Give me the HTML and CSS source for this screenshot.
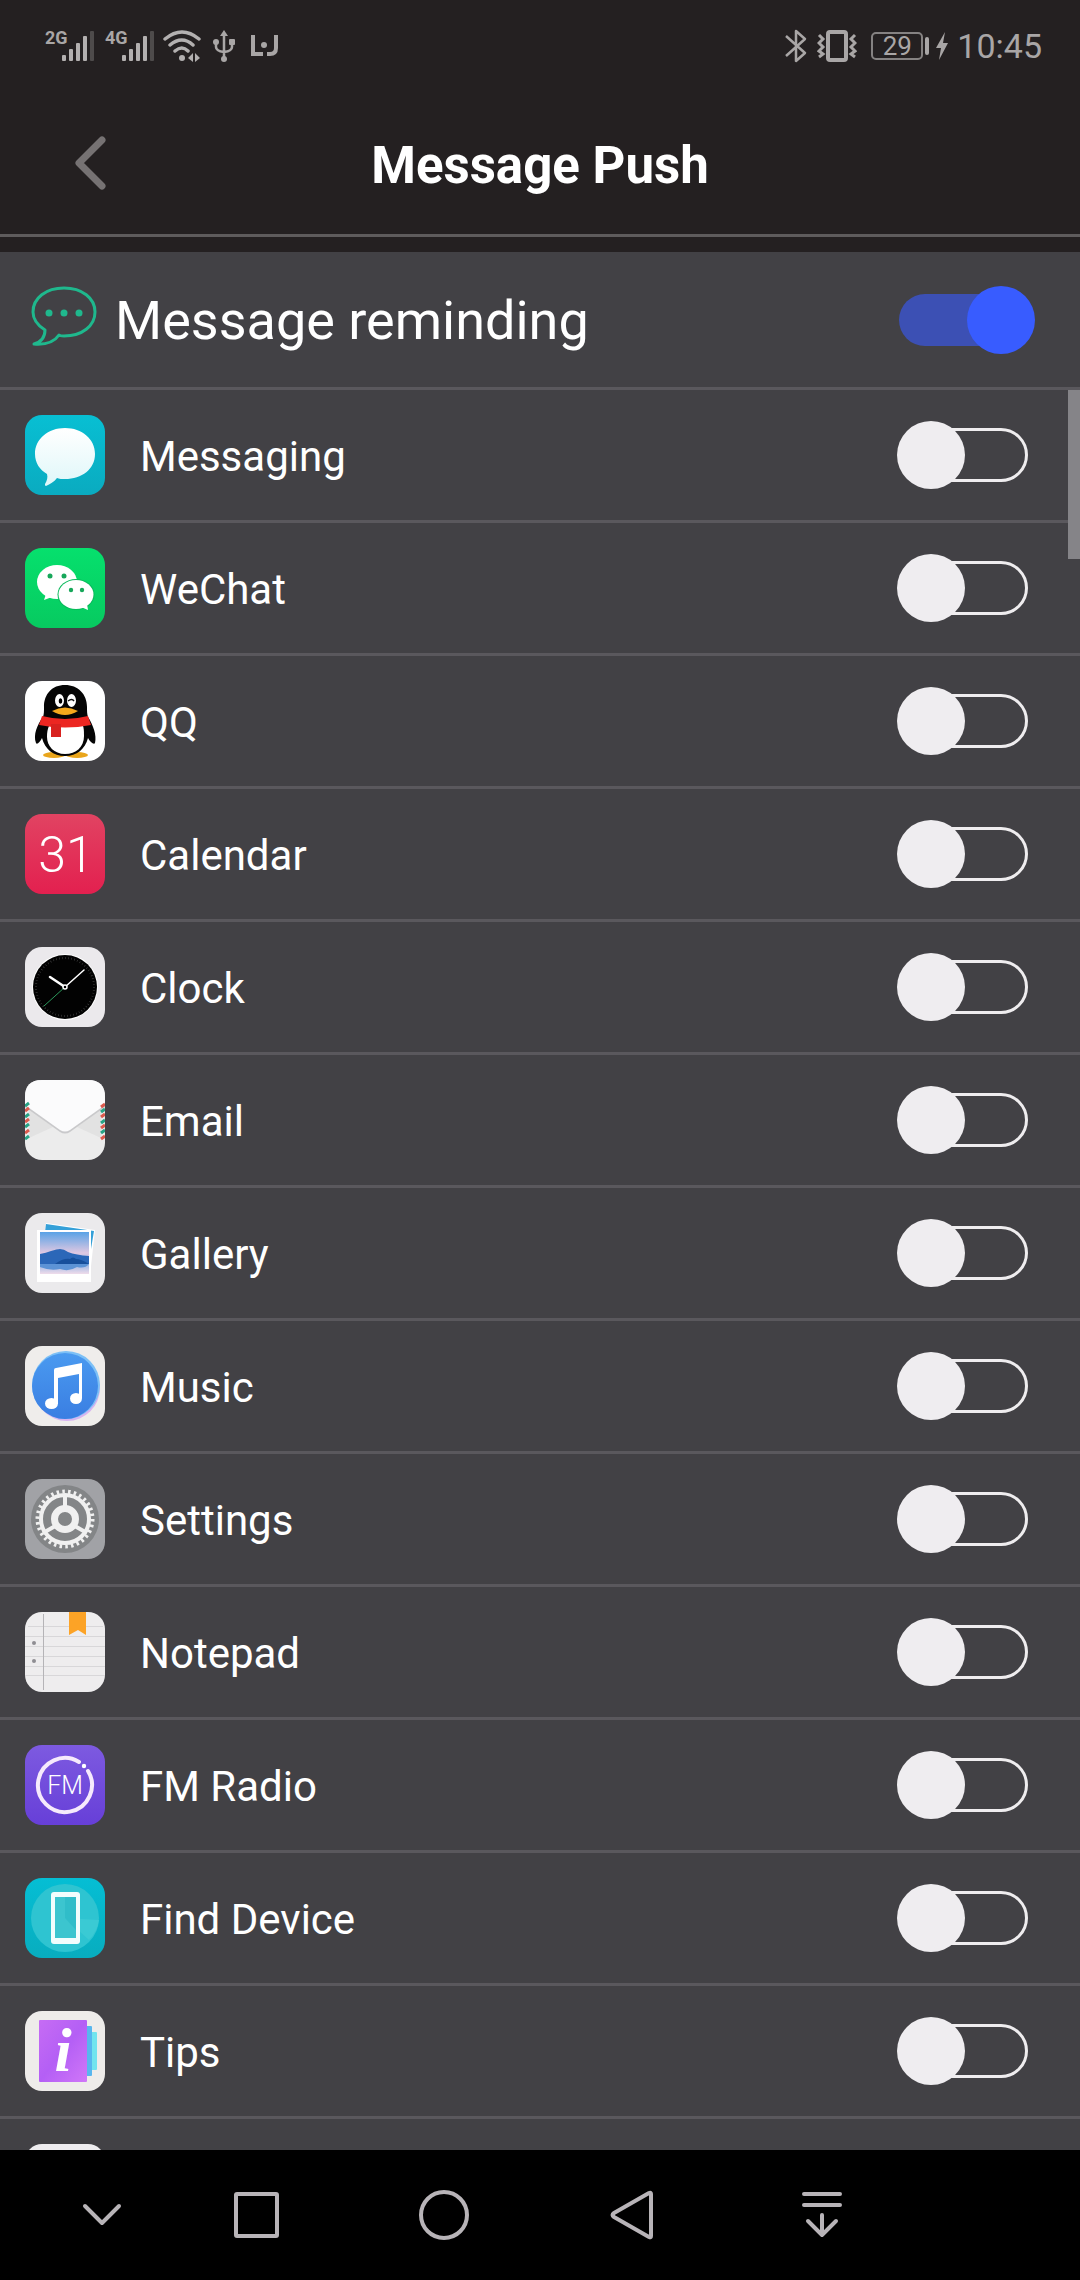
FILE: index.html
```html
<!DOCTYPE html>
<html lang="en">
<head>
<meta charset="utf-8">
<meta name="viewport" content="width=device-width, initial-scale=1">
<title>Message Push</title>
<link rel="stylesheet" href="styles.css">
</head>
<body>
<div class="screen">
  <div class="status-bar">
    <div class="status-group">
      <div class="signal">
        <span class="network">2G</span>
        <svg width="32" height="32" viewBox="0 0 32 32" fill="#b3b0b0"><rect y="25" width="4" height="6" rx="1"/><rect x="7" y="19" width="4" height="12" rx="1"/><rect x="14" y="13" width="4" height="18" rx="1"/><rect x="21" y="6" width="4" height="25" rx="1"/><rect x="28" y="1" width="4" height="30" rx="1" fill="#4e4b4b"/></svg>
      </div>
      <div class="signal">
        <span class="network">4G</span>
        <svg width="32" height="32" viewBox="0 0 32 32" fill="#b3b0b0"><rect y="25" width="4" height="6" rx="1"/><rect x="7" y="19" width="4" height="12" rx="1"/><rect x="14" y="13" width="4" height="18" rx="1"/><rect x="21" y="6" width="4" height="25" rx="1"/><rect x="28" y="1" width="4" height="30" rx="1" fill="#4e4b4b"/></svg>
      </div>
      <svg class="wifi" width="38" height="32" viewBox="0 0 38 32" fill="none" stroke="#b3b0b0" stroke-width="3.500" stroke-linecap="round"><path d="M2 9Q19-5 36 9M7 15Q19 5 30 15M12 21Q19 15 25 21"/><circle cx="19" cy="28" r="3" fill="#b3b0b0" stroke="none"/><path d="M30 23v9l-5-4zM32 23v9l5-4z" fill="#b3b0b0" stroke="none"/></svg>
      <svg class="usb" width="22" height="32" viewBox="0 0 22 32" fill="none" stroke="#a9a6a6" stroke-width="2.500"><path d="M11 4v24M3 11v6q0 4 8 5 8-1 8-5v-6"/><g fill="#a9a6a6" stroke="none"><path d="M11 0l4 6H7z"/><circle cx="11" cy="29" r="3"/><circle cx="3" cy="12" r="3"/><rect x="16" y="9" width="6" height="6" rx="1"/></g></svg>
      <svg class="brand" width="30" height="24" viewBox="0 0 30 24" fill="none" stroke="#a9a6a6" stroke-width="4"><path d="M3 1v19h10M26 1v13q0 6-6 6h-3"/><circle cx="14" cy="11" r="3" fill="#a9a6a6" stroke="none"/></svg>
    </div>
    <div class="status-group">
      <svg width="22" height="34" viewBox="0 0 22 34" fill="none" stroke="#a9a6a6" stroke-width="2.500" stroke-linejoin="round"><path d="M1 7l19 17-9 8V2l9 8L1 27"/></svg>
      <svg class="vibrate" width="40" height="34" viewBox="0 0 40 34" fill="none" stroke="#a9a6a6"><rect x="11" y="3" width="18" height="28" rx="2" stroke-width="4"/><path d="M2 6l4 4-4 4 4 4-4 4 4 3-4 3M38 6l-4 4 4 4-4 4 4 4-4 3 4 3" stroke-width="3"/></svg>
      <div class="battery"><span class="battery-level">29</span><span class="battery-tip"></span></div>
      <svg class="bolt" width="12" height="28" viewBox="0 0 12 28" fill="#a9a6a6"><path d="M9 0L0 16h5L3 28l9-17H7z"/></svg>
      <span class="time">10:45</span>
    </div>
  </div>

  <header class="title-bar">
    <button class="back" type="button" aria-label="Back"><svg width="34" height="58" viewBox="0 0 34 58" fill="none" stroke="#767273" stroke-width="7" stroke-linecap="round" stroke-linejoin="round"><path d="M29 6L6 29l23 23"/></svg></button>
    <h1 class="title">Message Push</h1>
  </header>

  <label class="master">
    <svg width="66" height="68" viewBox="0 0 66 68" fill="none" stroke="#1fb88d" stroke-width="3" stroke-linejoin="round"><path d="M14 44C6 39 2 33 2 26 2 12 15 2 33 2s31 10 31 24-13 24-31 24c-2 0-4 0-5-1-4 6-12 10-25 9 7-2 11-7 11-14z"/><g fill="#1fb88d" stroke="none"><circle cx="18" cy="27" r="3.500"/><circle cx="33" cy="27" r="3.500"/><circle cx="48" cy="27" r="3.500"/></g></svg>
    <span class="master-name">Message reminding</span>
    <input class="switch switch-master" type="checkbox" role="switch" checked>
  </label>

  <main class="apps">
    <label class="app">
      <svg class="icon" viewBox="0 0 80 80"><defs><linearGradient id="g-msg" x2="0" y2="1"><stop stop-color="#08bfd3"/><stop offset="1" stop-color="#0aabc0"/></linearGradient><linearGradient id="g-bub" x2="0" y2="1"><stop stop-color="#fff"/><stop offset="1" stop-color="#dff7f9"/></linearGradient></defs><rect width="80" height="80" rx="17" fill="url(#g-msg)"/><path d="M40 13c17 0 30 11 30 26S57 64 40 64c-3 0-6 0-8-1-3 4-7 6-11 8-1 0-1-1-1-2 2-3 3-7 2-10-7-4-12-11-12-20 0-15 13-26 30-26z" fill="url(#g-bub)"/></svg>
      <span class="name">Messaging</span><input class="switch" type="checkbox" role="switch">
    </label>
    <label class="app">
      <svg class="icon" viewBox="0 0 80 80"><defs><linearGradient id="g-we" x2="0" y2="1"><stop stop-color="#06e06d"/><stop offset="1" stop-color="#07ca60"/></linearGradient></defs><rect width="80" height="80" rx="17" fill="url(#g-we)"/><g fill="#fff"><ellipse cx="32" cy="34" rx="20" ry="17"/><path d="M21 46l-2 6 8-3z"/><ellipse cx="51" cy="46.500" rx="18.500" ry="15.500" fill="#08b95a"/><ellipse cx="51" cy="46.500" rx="17.500" ry="14.500"/><path d="M62 56l1 6-7-3z"/></g><g fill="#17a75a"><circle cx="25" cy="28" r="2.500"/><circle cx="39" cy="28" r="2.500"/><circle cx="46" cy="42" r="2.200"/><circle cx="57" cy="42" r="2.200"/></g></svg>
      <span class="name">WeChat</span><input class="switch" type="checkbox" role="switch">
    </label>
    <label class="app">
      <svg class="icon" viewBox="0 0 80 80"><rect width="80" height="80" rx="17" fill="#fff"/><g fill="#e9a51b"><ellipse cx="29" cy="74" rx="11" ry="3"/><ellipse cx="52" cy="74" rx="11" ry="3"/></g><path d="M40 4c13 0 22 9 22 22 0 4 0 7 1 10 5 8 9 18 7 26-1 2-5-1-7-5-3 11-11 18-23 18s-20-7-23-18c-2 4-5 7-6 5-3-8 1-18 7-26 1-3 1-6 1-10C19 13 27 4 40 4z" fill="#050505"/><path d="M24 45h34q1 2 1 10c0 11-8 18-19 18s-18-8-18-17q0-7 2-11z" fill="#fff"/><path d="M17 35q23 6 46 0l3 9q-26 5-52 0z" fill="#ec2621"/><path d="M26 43h10v13H26z" fill="#d8221f"/><path d="M27 30q13-7 26 0-13 8-26 0z" fill="#f5a81c"/><ellipse cx="34.500" cy="19.500" rx="4.500" ry="6.500" fill="#fff"/><ellipse cx="46.500" cy="19.500" rx="4.500" ry="6.500" fill="#fff"/><ellipse cx="35.500" cy="20" rx="1.800" ry="2.800"/><path d="M43 20q4-3 6 0" fill="none" stroke="#111" stroke-width="1.500"/></svg>
      <span class="name">QQ</span><input class="switch" type="checkbox" role="switch">
    </label>
    <label class="app">
      <svg class="icon" viewBox="0 0 80 80"><defs><linearGradient id="g-cal" x2="0" y2="1"><stop stop-color="#e14362"/><stop offset="1" stop-color="#e3204f"/></linearGradient></defs><rect width="80" height="80" rx="17" fill="url(#g-cal)"/><text class="calendar-day" x="41" y="58" text-anchor="middle">31</text></svg>
      <span class="name">Calendar</span><input class="switch" type="checkbox" role="switch">
    </label>
    <label class="app">
      <svg class="icon" viewBox="0 0 80 80"><rect width="80" height="80" rx="17" fill="#ebe9ec"/><circle cx="40" cy="40" r="33" fill="#fff"/><circle cx="40" cy="40" r="32" fill="#020202"/><circle cx="40" cy="40" r="29" fill="none" stroke="#444" stroke-width="2" stroke-dasharray="0.600 2.437"/><g fill="none" stroke-linecap="round"><path d="M40 40L19 59" stroke="#2c9a5c" stroke-width="1"/><path d="M40 40L25 30" stroke="#fff" stroke-width="2.500"/><path d="M40 40L59 23" stroke="#fff" stroke-width="1.500"/></g><circle cx="40" cy="40" r="2" fill="#000" stroke="#fff" stroke-width="1.500"/></svg>
      <span class="name">Clock</span><input class="switch" type="checkbox" role="switch">
    </label>
    <label class="app">
      <svg class="icon" viewBox="0 0 80 80"><rect width="80" height="80" rx="17" fill="#ececec"/><path d="M4 29l24 18L4 58zM76 29L52 47l24 11z" fill="#e2e2e2"/><path d="M0 27V17Q0 0 17 0h46q17 0 17 17v10L45 52q-5 3-10 0z" fill="#c9c9cb"/><path d="M0 25v-8Q0 0 17 0h46q17 0 17 17v8L45 50q-5 3-10 0z" fill="#fbfbfc"/><g stroke-width="3"><path d="M0 31l4-3M0 42l4-3M0 53l4-3M76 37l4-3M76 48l4-3M76 59l4-3M76 27l4-3" stroke="#dc5a4e"/><path d="M0 26l4-3M0 37l4-3M0 47l4-3M0 59l4-3M76 32l4-3M76 43l4-3M76 53l4-3" stroke="#27a486"/></g></svg>
      <span class="name">Email</span><input class="switch" type="checkbox" role="switch">
    </label>
    <label class="app">
      <svg class="icon" viewBox="0 0 80 80"><defs><linearGradient id="g-sky" x2="0" y2="1"><stop stop-color="#58a2e6"/><stop offset=".5" stop-color="#e0c8e2"/><stop offset=".75" stop-color="#92b4e4"/><stop offset="1" stop-color="#f0dcea"/></linearGradient></defs><rect width="80" height="80" rx="17" fill="#ebeaec"/><path d="M21 10l49 7-4 36-49-7z" fill="#fff"/><path d="M21 11l48 7-4 24-47-7z" fill="#35a0d8"/><path d="M12 17h54v52H12z" fill="#fff"/><path d="M15 19h49v42H15z" fill="url(#g-sky)"/><path d="M15 41q6-1 11-3 6-2 9-2 4 0 8 3 8 3 21 4v8H15z" fill="#2b67b8"/><path d="M30 51q8-6 15-5 3-3 6 0 5 0 13 5z" fill="#174f9b"/><path d="M15 51h49q-4 5-12 3-8 5-17 2-10 2-20-2z" fill="#5c93d6"/></svg>
      <span class="name">Gallery</span><input class="switch" type="checkbox" role="switch">
    </label>
    <label class="app">
      <svg class="icon" viewBox="0 0 80 80"><defs><linearGradient id="g-mus" x2="0" y2="1"><stop stop-color="#4a9af0"/><stop offset="1" stop-color="#3a7ee2"/></linearGradient></defs><rect width="80" height="80" rx="17" fill="#efedeb"/><circle cx="42" cy="42" r="33" fill="#d7b4f0"/><circle cx="41" cy="39" r="34" fill="#7cc0f6"/><circle cx="40" cy="40" r="33" fill="url(#g-mus)"/><path d="M29 24q0-2 2-2l26-5v35H54V28l-21 4v26h-4z" fill="#fff"/><ellipse cx="26.500" cy="57.500" rx="6.500" ry="5.500" fill="#fff"/><ellipse cx="51" cy="52.500" rx="6" ry="5.500" fill="#fff"/></svg>
      <span class="name">Music</span><input class="switch" type="checkbox" role="switch">
    </label>
    <label class="app">
      <svg class="icon" viewBox="0 0 80 80"><rect width="80" height="80" rx="17" fill="#a1a2a6"/><circle cx="40" cy="40" r="34" fill="#838587"/><g fill="none" stroke="#f0f0f0"><circle cx="40" cy="40" r="24" stroke-width="4"/><circle cx="40" cy="40" r="27.500" stroke-width="4" stroke-dasharray="2.500 3.259"/><circle cx="40" cy="40" r="10.500" stroke-width="7"/><path d="M40 30V16M48 46l14 8M32 46l-14 8" stroke-width="4"/></g></svg>
      <span class="name">Settings</span><input class="switch" type="checkbox" role="switch">
    </label>
    <label class="app">
      <svg class="icon" viewBox="0 0 80 80"><rect width="80" height="80" rx="17" fill="#eeedee"/><path d="M3 14.500h75M0 24.500h80M0 34.500h80M0 44.500h80M0 54.500h80M0 63.500h80" stroke="#d8d7d9"/><path d="M18.500 2v76" stroke="#b5b4b7"/><circle cx="9" cy="31" r="2" fill="#8e8d92"/><circle cx="9" cy="49" r="2" fill="#8e8d92"/><path d="M44 0h17v23l-8-5-9 5z" fill="#fca326"/></svg>
      <span class="name">Notepad</span><input class="switch" type="checkbox" role="switch">
    </label>
    <label class="app">
      <svg class="icon" viewBox="0 0 80 80"><defs><linearGradient id="g-fm" x2="0" y2="1"><stop stop-color="#7d5ae0"/><stop offset="1" stop-color="#673fd8"/></linearGradient></defs><rect width="80" height="80" rx="17" fill="url(#g-fm)"/><path d="M54 17A27 27 0 1 0 63 26" fill="none" stroke="#f6eafc" stroke-width="4" stroke-linecap="round"/><circle cx="59" cy="21" r="2.200" fill="#fff"/><text class="fm" x="40" y="49" text-anchor="middle">FM</text></svg>
      <span class="name">FM Radio</span><input class="switch" type="checkbox" role="switch">
    </label>
    <label class="app">
      <svg class="icon" viewBox="0 0 80 80"><defs><linearGradient id="g-find" x2="0" y2="1"><stop stop-color="#05bed4"/><stop offset="1" stop-color="#08adbf"/></linearGradient></defs><rect width="80" height="80" rx="17" fill="url(#g-find)"/><circle cx="40" cy="40" r="34" fill="#2ec4d1"/><path d="M40 40l34 2q-2 12-10 20z" fill="#3acad4"/><rect x="26" y="14" width="29" height="52" rx="3" fill="#f2fdfd"/><path d="M30 19h21v41H30z" fill="#3cc5cf"/><path d="M40 40L51 52V19H40z" fill="#30bdc9"/></svg>
      <span class="name">Find Device</span><input class="switch" type="checkbox" role="switch">
    </label>
    <label class="app">
      <svg class="icon" viewBox="0 0 80 80"><defs><linearGradient id="g-tip" x2="1" y2="1"><stop stop-color="#c66cf4"/><stop offset=".5" stop-color="#b45ff5"/><stop offset="1" stop-color="#d077f8"/></linearGradient></defs><rect width="80" height="80" rx="17" fill="#eeecea"/><rect x="60" y="21" width="12" height="38" rx="1" fill="#71e4ee"/><rect x="55" y="15" width="12" height="50" rx="1" fill="#58b6ee"/><rect x="14" y="9" width="48" height="62" rx="1" fill="url(#g-tip)"/><text class="tips" x="38" y="60" text-anchor="middle">i</text></svg>
      <span class="name">Tips</span><input class="switch" type="checkbox" role="switch">
    </label>
    <div class="app">
      <svg class="icon" viewBox="0 0 80 80"><rect width="80" height="80" rx="17" fill="#eeecef"/></svg>
      <span class="name"></span><input class="switch" type="checkbox" role="switch" aria-label="App">
    </div>
    <div class="scroll-thumb"></div>
  </main>

  <nav class="nav-bar">
    <button class="nav-button" type="button" aria-label="Hide navigation"><svg width="42" height="50" viewBox="0 0 42 50"><path d="M4 16l17 17 17-17"/></svg></button>
    <button class="nav-button" type="button" aria-label="Recent apps"><svg width="50" height="50" viewBox="0 0 50 50"><rect x="5" y="4" width="41" height="42" rx="1"/></svg></button>
    <button class="nav-button" type="button" aria-label="Home"><svg width="50" height="50" viewBox="0 0 50 50"><circle cx="25" cy="25" r="23"/></svg></button>
    <button class="nav-button" type="button" aria-label="Go back"><svg width="46" height="50" viewBox="0 0 46 50"><path d="M42 4v42q0 2-2 1L5 27q-3-2 0-4L40 3q2-1 2 1z"/></svg></button>
    <button class="nav-button" type="button" aria-label="Open notifications"><svg width="42" height="50" viewBox="0 0 42 50"><path d="M3 4h36M3 15h36M21 25v20M7 31l14 14 14-14"/></svg></button>
  </nav>
</div>
</body>
</html>
```
FILE: styles.css
```css
*,
*::before,
*::after {
  box-sizing: border-box;
}

body {
  margin: 0;
  background: #000;
  color: #fff;
  font-family: Roboto, "Liberation Sans", sans-serif;
}

svg {
  display: block;
  flex-shrink: 0;
}

.screen {
  display: flex;
  flex-direction: column;
  height: 100vh;
  overflow: hidden;
  background: #242021;
}

.status-bar {
  display: flex;
  flex-shrink: 0;
  align-items: center;
  justify-content: space-between;
  height: 92px;
  padding: 0 38px 0 45px;
  color: #a9a6a6;
}

.status-group {
  display: flex;
  align-items: center;
}

.signal {
  display: flex;
  align-items: flex-start;
  justify-content: space-between;
  width: 49px;
  margin-right: 11px;
}

.network {
  width: 17px;
  font: bold 18px/16px "Liberation Sans Narrow", Roboto, sans-serif;
}

.wifi {
  margin: 0 12px 0 -2px;
}

.usb {
  margin-right: 15px;
}

.vibrate {
  margin: 0 14px 0 10px;
}

.battery {
  display: flex;
  align-items: center;
  gap: 2px;
  margin-right: 7px;
}

.battery-level {
  width: 52px;
  border: 2px solid #858282;
  border-radius: 5px;
  font-size: 26px;
  line-height: 24px;
  text-align: center;
}

.battery-tip {
  width: 4px;
  height: 18px;
  border-radius: 2px;
  background: #a9a6a6;
}

.bolt {
  margin-right: 9px;
}

.time {
  font-size: 34px;
  line-height: 40px;
}

.title-bar {
  display: grid;
  flex-shrink: 0;
  grid-template-columns: 180px 1fr 180px;
  align-items: center;
  height: 145px;
  margin-bottom: 15px;
  border-bottom: 3px solid #5e5b5c;
}

.back {
  justify-self: center;
  padding: 0;
  border: 0;
  background: none;
}

.title {
  margin: 0;
  padding-top: 5px;
  font-size: 51px;
  font-weight: 700;
  line-height: 64px;
  text-align: center;
}

.master {
  display: flex;
  flex-shrink: 0;
  align-items: center;
  height: 138px;
  padding: 0 45px 0 31px;
  border-bottom: 3px solid #5a585d;
  background: #424145;
}

.master-name {
  flex: 1;
  margin-left: 18px;
  padding-top: 3px;
  font-size: 54px;
  line-height: 64px;
}

.apps {
  position: relative;
  flex: 1;
  min-height: 0;
  overflow: hidden;
  background: #424145;
}

.app {
  display: flex;
  align-items: center;
  height: 133px;
  padding: 0 52px 0 25px;
  border-bottom: 3px solid #5a585d;
}

.icon {
  width: 80px;
  height: 80px;
}

.name {
  flex: 1;
  margin-left: 35px;
  padding-top: 4px;
  font-size: 42px;
  line-height: 50px;
}

.calendar-day {
  fill: #fff;
  font-size: 50px;
  font-weight: 300;
}

.fm {
  fill: #fff;
  font-size: 25px;
  font-weight: 300;
}

.tips {
  fill: #fff;
  font: italic bold 62px "Liberation Serif", serif;
}

.switch {
  display: grid;
  align-items: center;
  width: 131px;
  height: 68px;
  margin: 0;
  appearance: none;
}

.switch::before,
.switch::after {
  grid-area: 1 / 1;
  content: "";
}

.switch::before {
  height: 54px;
  margin-left: 10px;
  border: 3px solid #efedef;
  border-radius: 27px;
}

.switch::after {
  width: 68px;
  height: 68px;
  border-radius: 50%;
  background: #efedf0;
}

.switch-master {
  width: 136px;
}

.switch-master:checked::before {
  height: 52px;
  margin: 0 16px 0 0;
  border: 0;
  background: #3c50b4;
}

.switch-master:checked::after {
  justify-self: end;
  background: #385cff;
}

.scroll-thumb {
  position: absolute;
  top: 0;
  right: 0;
  width: 12px;
  height: 169px;
  background: #858488;
}

.nav-bar {
  display: grid;
  flex-shrink: 0;
  grid-template-columns: 204fr 104fr 272fr 104fr 276fr 120fr;
  height: 130px;
  background: #000;
}

.nav-button {
  display: flex;
  align-items: center;
  justify-content: center;
  padding: 0;
  border: 0;
  background: none;
}

.nav-button svg {
  fill: none;
  stroke: #b8b4b8;
  stroke-width: 4;
  stroke-linecap: round;
  stroke-linejoin: round;
}
```
